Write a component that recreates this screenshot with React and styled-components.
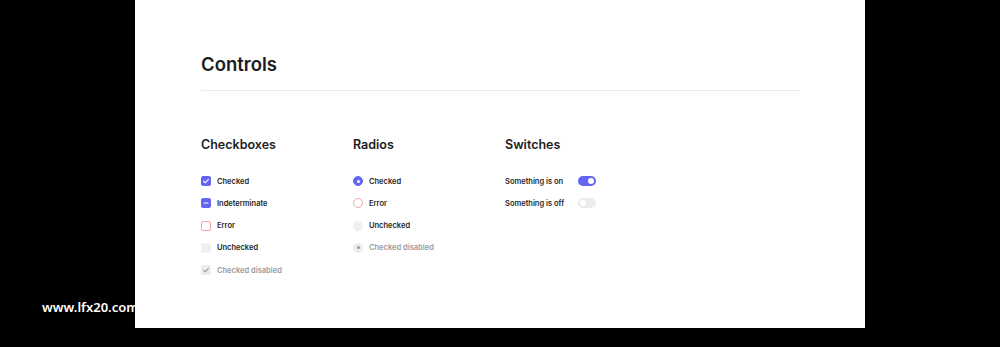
import React from 'react';
import styled, { createGlobalStyle } from 'styled-components';

const GlobalStyle = createGlobalStyle`
  html, body {
    margin: 0;
    padding: 0;
    background: #000;
  }
  body {
    font-family: Inter, "Noto Sans", sans-serif;
  }
`;

const accent = '#6466f1';

const Stage = styled.div`
  position: relative;
  width: 1000px;
  height: 347px;
  background: #000;
  overflow: hidden;
`;

const Panel = styled.div`
  margin-left: 135px;
  width: 730px;
  height: 328px;
  background: #fff;
  box-sizing: border-box;
  padding: 52px 65px 0 66px;
`;

const Title = styled.h1`
  margin: 0;
  font-size: 18.5px;
  line-height: 24px;
  font-weight: 600;
  color: #1c1c1e;
`;

const Divider = styled.hr`
  margin: 14px 0 0;
  border: 0;
  height: 1px;
  background: #ebebeb;
`;

const Columns = styled.div`
  display: grid;
  grid-template-columns: 152px 152px 152px;
  margin-top: 45px;
`;

const Column = styled.section`
  display: flex;
  flex-direction: column;
`;

const Heading = styled.h2`
  margin: 0 0 16px;
  font-size: 12.5px;
  line-height: 18px;
  font-weight: 600;
  color: #1c1c1e;
`;

const Row = styled.div`
  display: flex;
  align-items: center;
  height: 22.25px;
  gap: 6px;
`;

const Label = styled.span`
  font-size: 7.5px;
  font-weight: 600;
  color: ${p => (p.$disabled ? '#9c9c9c' : '#262628')};
  width: ${p => (p.$fixed ? '67px' : 'auto')};
`;

const boxColors = {
  checked: { bg: accent, border: accent },
  indeterminate: { bg: accent, border: accent },
  error: { bg: '#fff', border: '#f0a5ab' },
  unchecked: { bg: '#f0f0f0', border: '#f0f0f0' },
  disabled: { bg: '#ececec', border: '#ececec' },
};

const Box = styled.span`
  width: 10px;
  height: 10px;
  box-sizing: border-box;
  border-radius: 2px;
  border: 1px solid ${p => boxColors[p.$state].border};
  background: ${p => boxColors[p.$state].bg};
  display: flex;
  align-items: center;
  justify-content: center;
`;

const Circle = styled.span`
  width: 10px;
  height: 10px;
  box-sizing: border-box;
  border-radius: 50%;
  border: 1px solid ${p => boxColors[p.$state].border};
  background: ${p => boxColors[p.$state].bg};
  display: flex;
  align-items: center;
  justify-content: center;

  &::after {
    content: '';
    display: ${p => (p.$state === 'checked' || p.$state === 'disabled' ? 'block' : 'none')};
    width: 3px;
    height: 3px;
    border-radius: 50%;
    background: ${p => (p.$state === 'disabled' ? '#9a9a9a' : '#fff')};
  }
`;

const Track = styled.span`
  position: relative;
  width: 18px;
  height: 10px;
  border-radius: 5px;
  background: ${p => (p.$on ? accent : '#ececec')};

  &::after {
    content: '';
    position: absolute;
    top: 2px;
    left: ${p => (p.$on ? '10px' : '2px')};
    width: 6px;
    height: 6px;
    border-radius: 50%;
    background: #fff;
  }
`;

const Watermark = styled.div`
  position: absolute;
  left: 42px;
  top: 298px;
  font-family: "Noto Sans", sans-serif;
  font-size: 13px;
  font-weight: 600;
  line-height: 18px;
  color: #fff;
`;

const Tick = ({ color }) => (
  <svg width="8" height="8" viewBox="0 0 8 8">
    <path d="M1.6 4.2 L3.2 5.8 L6.4 2.3" fill="none" stroke={color} strokeWidth="1.1" strokeLinecap="round" strokeLinejoin="round" />
  </svg>
);

const Dash = () => (
  <svg width="8" height="8" viewBox="0 0 8 8">
    <path d="M2 4 H6" stroke="#fff" strokeWidth="1.2" strokeLinecap="round" />
  </svg>
);

const checkboxes = [
  { state: 'checked', label: 'Checked' },
  { state: 'indeterminate', label: 'Indeterminate' },
  { state: 'error', label: 'Error' },
  { state: 'unchecked', label: 'Unchecked' },
  { state: 'disabled', label: 'Checked disabled' },
];

const radios = [
  { state: 'checked', label: 'Checked' },
  { state: 'error', label: 'Error' },
  { state: 'unchecked', label: 'Unchecked' },
  { state: 'disabled', label: 'Checked disabled' },
];

const switches = [
  { on: true, label: 'Something is on' },
  { on: false, label: 'Something is off' },
];

const App = () => (
  <Stage>
    <GlobalStyle />
    <Panel>
      <Title>Controls</Title>
      <Divider />
      <Columns>
        <Column>
          <Heading>Checkboxes</Heading>
          {checkboxes.map(c => (
            <Row key={c.label}>
              <Box $state={c.state}>
                {c.state === 'checked' && <Tick color="#fff" />}
                {c.state === 'disabled' && <Tick color="#9a9a9a" />}
                {c.state === 'indeterminate' && <Dash />}
              </Box>
              <Label $disabled={c.state === 'disabled'}>{c.label}</Label>
            </Row>
          ))}
        </Column>
        <Column>
          <Heading>Radios</Heading>
          {radios.map(r => (
            <Row key={r.label}>
              <Circle $state={r.state} />
              <Label $disabled={r.state === 'disabled'}>{r.label}</Label>
            </Row>
          ))}
        </Column>
        <Column>
          <Heading>Switches</Heading>
          {switches.map(s => (
            <Row key={s.label}>
              <Label $fixed>{s.label}</Label>
              <Track $on={s.on} />
            </Row>
          ))}
        </Column>
      </Columns>
    </Panel>
    <Watermark>www.lfx20.com</Watermark>
  </Stage>
);

export default App;
